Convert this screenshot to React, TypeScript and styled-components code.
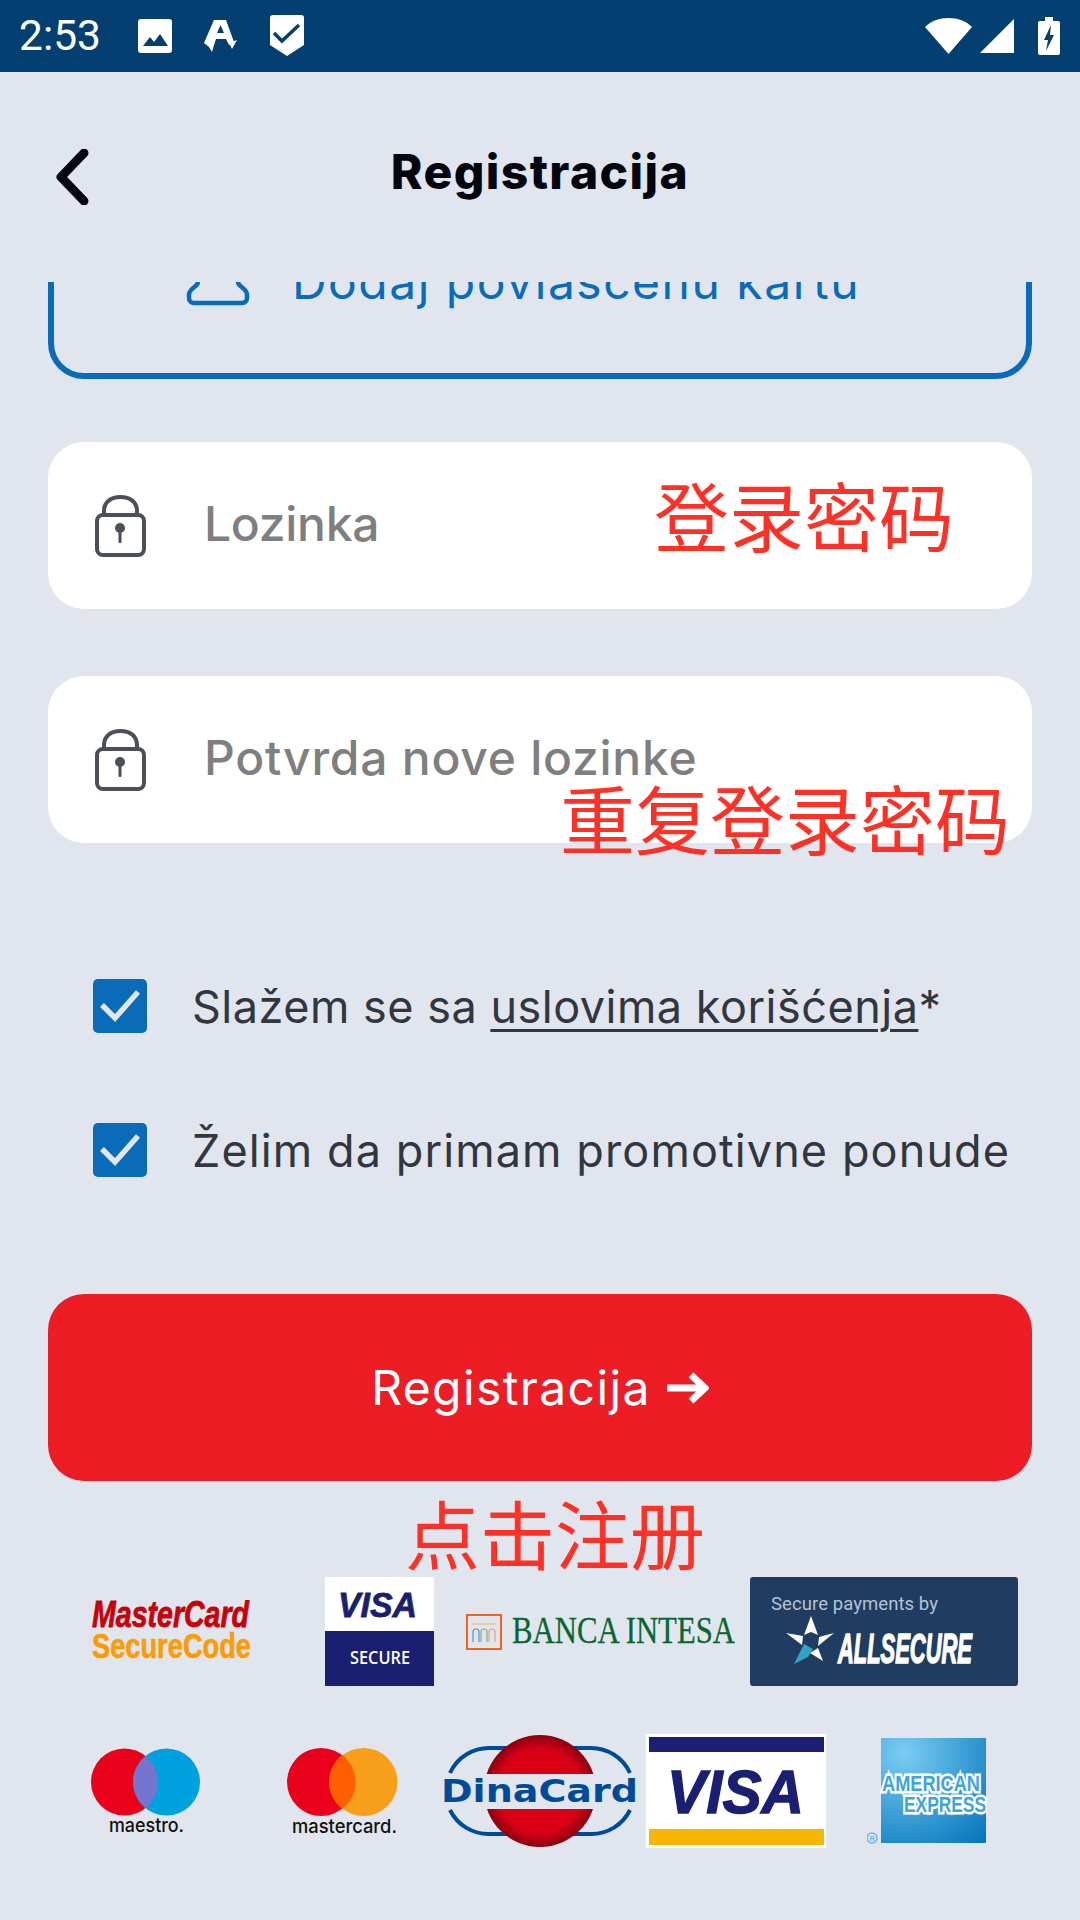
import React, { FC } from "react";
import styled, { createGlobalStyle } from "styled-components";

const Global = createGlobalStyle`
  html, body {
    margin: 0;
    padding: 0;
    background: #e1e6ee;
  }
  * { box-sizing: border-box; }
`;

const UI_FONT = `"Inter", "Noto Sans", sans-serif`;

const Page = styled.div`
  position: relative;
  width: 1080px;
  height: 1920px;
  overflow: hidden;
  background: #e1e6ee;
  display: flex;
  flex-direction: column;
  font-family: ${UI_FONT};
`;

const StatusBar = styled.div`
  height: 72px;
  background: #033f71;
  display: flex;
  align-items: center;
  padding: 0 20px 0 19px;
  flex-shrink: 0;
`;

const Time = styled.span`
  font-family: Roboto, sans-serif;
  font-size: 42.5px;
  line-height: 72px;
  color: #fff;
  width: 119px;
`;

const StatusIcons = styled.div`
  display: flex;
  align-items: center;
  gap: 32px;
`;

const SystemIcons = styled.div`
  margin-left: auto;
  display: flex;
  align-items: center;
  gap: 8px;
`;

const TopBar = styled.header`
  height: 210px;
  display: grid;
  grid-template-columns: 1fr auto 1fr;
  align-items: center;
  padding: 0 55px;
  flex-shrink: 0;
`;

const BackButton = styled.button`
  border: 0;
  background: none;
  padding: 0;
  width: 36px;
  height: 56px;
  justify-self: start;
`;

const Title = styled.h1`
  margin: 0 0 10px;
  font-size: 48px;
  line-height: 60px;
  font-weight: 800;
  color: #03060f;
  letter-spacing: 1.4px;
`;

const ScrollClip = styled.div`
  height: 97px;
  margin: 0 48px;
  overflow: hidden;
  flex-shrink: 0;
`;

const AddCardBox = styled.div`
  height: 200px;
  margin-top: -103px;
  border: 6px solid #0a6bb8;
  border-radius: 36px;
  display: flex;
  justify-content: center;
  align-items: flex-start;
  gap: 42px;
  padding: 97px 34px 0 0;
  color: #0a6bb8;
`;

const AddCardLabel = styled.span`
  font-size: 48px;
  line-height: 56px;
  letter-spacing: 1.5px;
  margin-top: -28px;
  white-space: nowrap;
`;

const Form = styled.div`
  margin: 63px 48px 0;
  display: flex;
  flex-direction: column;
`;

const Field = styled.div<{ $gap?: number }>`
  height: 167px;
  margin-top: ${(p) => p.$gap ?? 0}px;
  background: #fff;
  border-radius: 36px;
  display: flex;
  align-items: center;
  padding-left: 47px;
  gap: 57px;
`;

const Placeholder = styled.span<{ $spacing: number }>`
  font-size: 48px;
  font-weight: 500;
  color: #7f7f7f;
  letter-spacing: ${(p) => p.$spacing}px;
  margin-top: -4px;
`;

const CheckRow = styled.div<{ $gap: number }>`
  height: 54px;
  margin-top: ${(p) => p.$gap}px;
  padding-left: 45px;
  display: flex;
  align-items: center;
  gap: 45px;
`;

const CheckBox = styled.span`
  width: 54px;
  height: 54px;
  border-radius: 5px;
  background: #0a6bb8;
  display: flex;
  align-items: center;
  justify-content: center;
  flex-shrink: 0;
`;

const CheckLabel = styled.span<{ $spacing: number }>`
  font-size: 45px;
  line-height: 54px;
  margin-top: 2px;
  color: #31363f;
  white-space: nowrap;
  letter-spacing: ${(p) => p.$spacing}px;
`;

const TermsLink = styled.span`
  text-decoration: underline;
  text-decoration-thickness: 3px;
  text-underline-offset: 6px;
`;

const SubmitButton = styled.button`
  height: 187px;
  margin-top: 117px;
  border: 0;
  border-radius: 36px;
  background: #ee1c25;
  color: #fff;
  font-family: ${UI_FONT};
  font-size: 48px;
  letter-spacing: 1.4px;
  display: flex;
  align-items: center;
  justify-content: center;
  gap: 16px;
`;

const LogoRow = styled.div<{ $top: number; $left: number }>`
  display: flex;
  align-items: center;
  margin-top: ${(p) => p.$top}px;
  padding-left: ${(p) => p.$left}px;
`;

const Logo = styled.svg<{ $gap?: number }>`
  display: block;
  flex-shrink: 0;
  margin-left: ${(p) => p.$gap ?? 0}px;
`;

const Annotation = styled.span<{ $x: number; $y: number }>`
  position: absolute;
  left: ${(p) => p.$x}px;
  top: ${(p) => p.$y}px;
  font-family: "Noto Sans CJK SC", sans-serif;
  font-size: 75px;
  line-height: 75px;
  color: #ff3126;
  white-space: nowrap;
`;

const LockIcon: FC = () => (
  <svg width="52" height="62" viewBox="0 0 52 62" fill="none">
    <path d="M9 21V16C9 7 16 2 25.500 2S42 7 42 16v5" stroke="#4a5056" strokeWidth="4" />
    <rect x="2" y="20" width="47" height="40" rx="6" stroke="#4a5056" strokeWidth="4" />
    <circle cx="25" cy="33" r="5" fill="#4a5056" />
    <rect x="23.500" y="34" width="3" height="14" rx="1" fill="#4a5056" />
  </svg>
);

const CheckMark: FC = () => (
  <svg width="41" height="32" viewBox="0 0 41 32" fill="none">
    <path d="M2 15l13 13L38 2" stroke="#e1e6ee" strokeWidth="5.500" />
  </svg>
);

const App: FC = () => (
  <Page>
    <Global />
    <StatusBar>
      <Time>2:53</Time>
      <StatusIcons>
        <svg width="34" height="34" viewBox="0 0 34 34">
          <rect width="34" height="34" rx="3" fill="#fff" />
          <path d="M5 27l7-9 4 5 6-8 8 12z" fill="#033f71" />
        </svg>
        <svg width="34" height="34" viewBox="0 0 34 34">
          <path fillRule="evenodd" d="M10 1h12l8 22-5 3-3-6H12l-2 6-2 7-3-5-5-4zM13 14h7l-3.500-8z" fill="#fff" />
          <path d="M25 24l3 6 5-9z" fill="#fff" />
        </svg>
        <svg width="34" height="42" viewBox="0 0 34 42">
          <path d="M3 0h28a3 3 0 0 1 3 3v27L17 41 0 30V3a3 3 0 0 1 3-3z" fill="#fff" />
          <path d="M4 18l8 8L29 10" stroke="#033f71" strokeWidth="3.500" fill="none" />
        </svg>
      </StatusIcons>
      <SystemIcons>
        <svg width="47" height="36" viewBox="0 0 47 36">
          <path d="M23.500 36L0 9C6 3 14 0 23.500 0S41 3 47 9z" fill="#fff" />
        </svg>
        <svg width="34" height="34" viewBox="0 0 34 34" style={{ marginRight: 16 }}>
          <path d="M34 0v34H0z" fill="#fff" />
        </svg>
        <svg width="22" height="38" viewBox="0 0 22 38">
          <path d="M7 0h8v4h5a2 2 0 0 1 2 2v30a2 2 0 0 1-2 2H2a2 2 0 0 1-2-2V6a2 2 0 0 1 2-2h5z" fill="#fff" />
          <path d="M13 8l-7 15h4l-2 11 8-16h-4z" fill="#033f71" />
        </svg>
      </SystemIcons>
    </StatusBar>

    <TopBar>
      <BackButton aria-label="Nazad">
        <svg width="36" height="56" viewBox="0 0 36 56" fill="none">
          <path d="M29 4L6 28l23 24" stroke="#03060f" strokeWidth="9" strokeLinecap="round" strokeLinejoin="round" />
        </svg>
      </BackButton>
      <Title>Registracija</Title>
    </TopBar>

    <ScrollClip>
      <AddCardBox>
        <svg width="64" height="24" viewBox="0 0 64 24" fill="none">
          <path d="M12 0C12 5 3 6 3 13v3a5 5 0 0 0 5 5h48a5 5 0 0 0 5-5v-3C61 6 52 5 52 0" stroke="#0a6bb8" strokeWidth="4.500" />
        </svg>
        <AddCardLabel>Dodaj povlašćenu kartu</AddCardLabel>
      </AddCardBox>
    </ScrollClip>

    <Form>
      <Field>
        <LockIcon />
        <Placeholder $spacing={-0.3}>Lozinka</Placeholder>
      </Field>
      <Field $gap={67}>
        <LockIcon />
        <Placeholder $spacing={0.75}>Potvrda nove lozinke</Placeholder>
      </Field>
      <CheckRow $gap={136}>
        <CheckBox><CheckMark /></CheckBox>
        <CheckLabel $spacing={0.5}>Slažem se sa <TermsLink>uslovima korišćenja</TermsLink>*</CheckLabel>
      </CheckRow>
      <CheckRow $gap={90}>
        <CheckBox><CheckMark /></CheckBox>
        <CheckLabel $spacing={1.1}>Želim da primam promotivne ponude</CheckLabel>
      </CheckRow>
      <SubmitButton>
        Registracija
        <svg width="42" height="32" viewBox="0 0 42 32" fill="none">
          <path d="M0 16h36M24 3l14 13-14 13" stroke="#fff" strokeWidth="7" />
        </svg>
      </SubmitButton>
    </Form>

    <LogoRow $top={96} $left={90}>
      <Logo width="165" height="64" viewBox="0 0 165 64">
        <text x="2" y="27" fontFamily="Liberation Sans" fontWeight="700" fontStyle="italic" fontSize="36" fill="#c8000a" stroke="#c8000a" strokeWidth="0.800" textLength="157" lengthAdjust="spacingAndGlyphs">MasterCard</text>
        <text x="2" y="58" fontFamily="Liberation Sans" fontWeight="700" fontSize="35" fill="#ff9a00" stroke="#ff9a00" strokeWidth="0.600" textLength="159" lengthAdjust="spacingAndGlyphs">SecureCode</text>
      </Logo>
      <Logo width="109" height="109" viewBox="0 0 109 109" $gap={70}>
        <rect width="109" height="54" fill="#fff" />
        <rect y="54" width="109" height="55" fill="#1a1f71" />
        <text x="13" y="40" fontFamily="Liberation Sans" fontWeight="700" fontStyle="italic" fontSize="35" fill="#1a1f71" stroke="#1a1f71" strokeWidth="0.800" textLength="79" lengthAdjust="spacingAndGlyphs">VISA</text>
        <text x="25" y="87" fontFamily="Open Sans, Liberation Sans" fontWeight="600" fontSize="18" fill="#fff" textLength="60" lengthAdjust="spacingAndGlyphs">SECURE</text>
      </Logo>
      <Logo width="269" height="36" viewBox="0 0 269 36" $gap={32}>
        <rect x="1" y="1" width="34" height="34" fill="none" stroke="#f0641f" strokeWidth="2" />
        <path d="M5 10h26" stroke="#e6c879" strokeWidth="1.400" />
        <path d="M7 28v-10a3 3 0 0 1 6 0v10" stroke="#5b90c6" strokeWidth="1.200" fill="none" />
        <path d="M15 28v-10a3 3 0 0 1 6 0v10" stroke="#7fae8e" strokeWidth="1.200" fill="none" />
        <path d="M23 28v-10a3 3 0 0 1 6 0v10" stroke="#e4a184" strokeWidth="1.200" fill="none" />
        <text x="46" y="29" fontFamily="Liberation Serif" fontSize="38" fill="#0a6630" stroke="#0a6630" strokeWidth="0.300" textLength="223" lengthAdjust="spacingAndGlyphs">BANCA INTESA</text>
      </Logo>
      <Logo width="268" height="109" viewBox="0 0 268 109" $gap={15}>
        <rect width="268" height="109" rx="3" fill="#213c61" />
        <text x="21" y="33" fontFamily="Roboto" fontSize="18.500" fill="#b6c2d3" textLength="167">Secure payments by</text>
        <path d="M61 39l7 19-7-3-7 3zM84 56l-15 4-1 9zM73 84l-5-13-8 5zM36 56l17 3-1 9z" fill="#fff" />
        <path d="M54 67l9 5-5 8-14 7z" fill="#33a3c4" />
        <text x="88" y="86" fontFamily="Liberation Sans" fontWeight="700" fontStyle="italic" fontSize="42" fill="#fff" stroke="#fff" strokeWidth="1.500" textLength="134" lengthAdjust="spacingAndGlyphs">ALLSECURE</text>
      </Logo>
    </LogoRow>

    <LogoRow $top={48} $left={91}>
      <Logo width="110" height="86" viewBox="0 0 110 86">
        <circle cx="33.500" cy="34" r="33.500" fill="#eb001b" />
        <circle cx="75.500" cy="34" r="33.500" fill="#00a1df" />
        <path d="M54.500 8a33.500 33.500 0 0 1 0 52 33.500 33.500 0 0 1 0-52z" fill="#7375cf" />
        <text x="18" y="84" fontFamily="Inter" fontWeight="500" fontSize="19" fill="#111" textLength="75" lengthAdjust="spacingAndGlyphs">maestro.</text>
      </Logo>
      <Logo width="112" height="86" viewBox="0 0 112 86" $gap={86}>
        <circle cx="34" cy="34" r="34" fill="#eb001b" />
        <circle cx="76.500" cy="34" r="34" fill="#f79e1b" />
        <path d="M55.250 7a34 34 0 0 1 0 54 34 34 0 0 1 0-54z" fill="#ff5f00" />
        <text x="5" y="85" fontFamily="Inter" fontWeight="500" fontSize="19" fill="#111" textLength="105" lengthAdjust="spacingAndGlyphs">mastercard.</text>
      </Logo>
      <Logo width="197" height="113" viewBox="0 0 197 113" $gap={42}>
        <defs>
          <radialGradient id="dina-red" cx="50%" cy="50%" r="50%">
            <stop offset="75%" stopColor="#d90016" />
            <stop offset="100%" stopColor="#8a0010" />
          </radialGradient>
        </defs>
        <path d="M9 38A43 43 0 0 1 49 13h101a43 43 0 0 1 39 25M9 75a43 43 0 0 0 40 24h101a43 43 0 0 0 39-24" fill="none" stroke="#004b97" strokeWidth="4" />
        <circle cx="99" cy="56" r="56" fill="url(#dina-red)" />
        <rect x="43" y="39" width="112" height="35" fill="#e1e6ee" />
        <text x="0" y="67" fontFamily="DejaVu Sans" fontWeight="700" fontSize="32" fill="#004b97" textLength="197" lengthAdjust="spacingAndGlyphs">DinaCard</text>
      </Logo>
      <Logo width="180" height="114" viewBox="0 0 180 114" $gap={8}>
        <rect width="180" height="114" fill="#fff" />
        <rect x="3" y="3" width="175" height="15" fill="#1a1f71" />
        <rect x="3" y="95" width="175" height="16" fill="#f7b600" />
        <text x="21" y="79" fontFamily="Liberation Sans" fontWeight="700" fontStyle="italic" fontSize="62" fill="#1a1f71" stroke="#1a1f71" strokeWidth="1.400" textLength="137" lengthAdjust="spacingAndGlyphs">VISA</text>
      </Logo>
      <Logo width="120" height="106" viewBox="0 0 120 106" $gap={41}>
        <defs>
          <radialGradient id="amex-blue" cx="22%" cy="15%" r="110%">
            <stop offset="0%" stopColor="#7acdf1" />
            <stop offset="100%" stopColor="#0677bd" />
          </radialGradient>
        </defs>
        <rect x="14" y="0" width="105" height="105" fill="url(#amex-blue)" />
        <text x="15" y="53" fontFamily="Liberation Sans" fontWeight="700" fontSize="22" fill="none" stroke="#fff" strokeWidth="5" textLength="98" lengthAdjust="spacingAndGlyphs">AMERICAN</text>
        <text x="15" y="53" fontFamily="Liberation Sans" fontWeight="700" fontSize="22" fill="#3ea4dc" textLength="98" lengthAdjust="spacingAndGlyphs">AMERICAN</text>
        <text x="37" y="74" fontFamily="Liberation Sans" fontWeight="700" fontSize="22" fill="none" stroke="#fff" strokeWidth="5" textLength="82" lengthAdjust="spacingAndGlyphs">EXPRESS</text>
        <text x="37" y="74" fontFamily="Liberation Sans" fontWeight="700" fontSize="22" fill="#3ea4dc" textLength="82" lengthAdjust="spacingAndGlyphs">EXPRESS</text>
        <circle cx="5" cy="100" r="5" fill="none" stroke="#6fb5df" strokeWidth="1.500" />
        <text x="2.400" y="103" fontFamily="Liberation Sans" fontWeight="700" fontSize="7.500" fill="#6fb5df">R</text>
      </Logo>
    </LogoRow>

    <Annotation $x={654} $y={476}>登录密码</Annotation>
    <Annotation $x={560} $y={779}>重复登录密码</Annotation>
    <Annotation $x={405} $y={1494}>点击注册</Annotation>
  </Page>
);

export default App;
